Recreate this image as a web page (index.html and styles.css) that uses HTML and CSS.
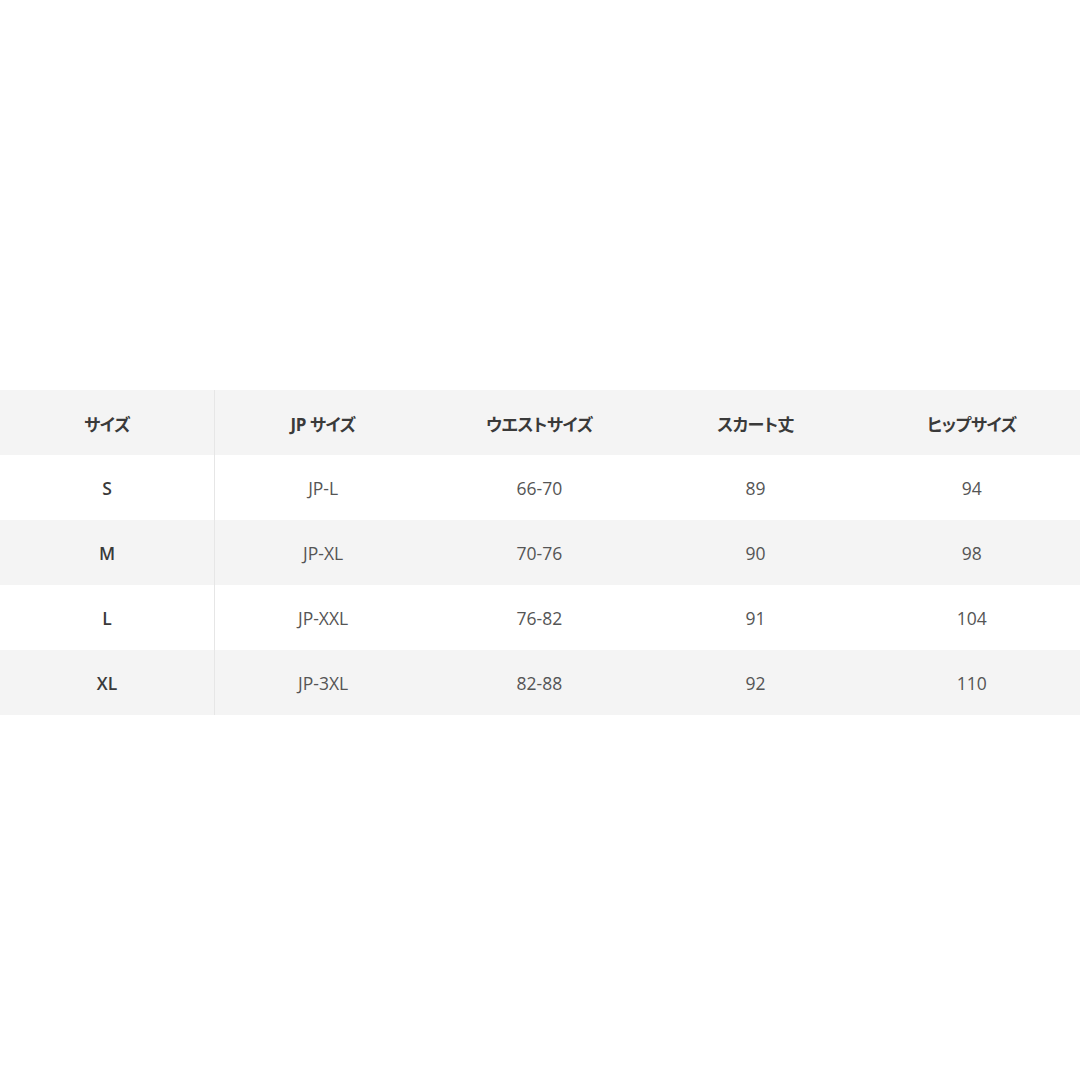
FILE: index.html
```html
<!DOCTYPE html>
<html lang="ja">
<head>
<meta charset="utf-8">
<title>サイズ表</title>
<link rel="stylesheet" href="styles.css">
</head>
<body>
<div class="page">
  <div class="size-table">
    <div class="row head">
      <div class="cell first">サイズ</div>
      <div class="cell">JP サイズ</div>
      <div class="cell">ウエストサイズ</div>
      <div class="cell">スカート丈</div>
      <div class="cell">ヒップサイズ</div>
    </div>
    <div class="row">
      <div class="cell first">S</div>
      <div class="cell">JP-L</div>
      <div class="cell">66-70</div>
      <div class="cell">89</div>
      <div class="cell">94</div>
    </div>
    <div class="row alt">
      <div class="cell first">M</div>
      <div class="cell">JP-XL</div>
      <div class="cell">70-76</div>
      <div class="cell">90</div>
      <div class="cell">98</div>
    </div>
    <div class="row">
      <div class="cell first">L</div>
      <div class="cell">JP-XXL</div>
      <div class="cell">76-82</div>
      <div class="cell">91</div>
      <div class="cell">104</div>
    </div>
    <div class="row alt">
      <div class="cell first">XL</div>
      <div class="cell">JP-3XL</div>
      <div class="cell">82-88</div>
      <div class="cell">92</div>
      <div class="cell">110</div>
    </div>
  </div>
</div>
</body>
</html>
```
FILE: styles.css
```css
html, body {
  margin: 0;
  padding: 0;
  background: #ffffff;
}
.page {
  width: 1080px;
  height: 1080px;
  padding-top: 390px;
  box-sizing: border-box;
}
.size-table {
  display: flex;
  flex-direction: column;
  font-family: "Open Sans", "Noto Sans CJK JP", sans-serif;
  font-size: 17.5px;
  color: #555555;
}
.row {
  display: grid;
  grid-template-columns: 215px repeat(4, 1fr);
  height: 65px;
  background: #ffffff;
}
.row.head,
.row.alt {
  background: #f4f4f4;
}
.cell {
  display: flex;
  align-items: center;
  justify-content: center;
  padding-top: 1px;
}
.cell.first {
  border-right: 1px solid #e6e6e6;
  font-weight: 600;
  color: #3a3a3a;
}
.row.head .cell {
  font-weight: 700;
  color: #3a3a3a;
  font-size: 17px;
  font-feature-settings: "palt";
  letter-spacing: -0.5px;
}
```
